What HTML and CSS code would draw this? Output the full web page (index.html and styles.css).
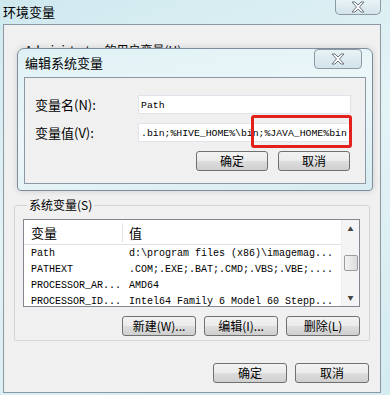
FILE: index.html
```html
<!DOCTYPE html>
<html lang="zh-CN">
  <head>
    <meta charset="UTF-8" />
    <meta name="viewport" content="width=device-width, initial-scale=1.0" />
    <title>环境变量</title>
    <link rel="stylesheet" href="styles.css">
  </head>
  <body>
    <div class="titlebar">
      <span class="title">环境变量</span>
      <div class="close-btn outer-close">
        <svg width="16" height="12" viewBox="0 0 16 12">
          <path d="M2 1h3l3 3 3-3h3l-4.5 5 4.5 5h-3l-3-3-3 3H2l4.5-5z" fill="#fff" stroke="#6b7480" stroke-width="1" />
        </svg>
      </div>
    </div>

    <div class="window">
      <div class="user-label">Administrator 的用户变量(U)</div>

      <fieldset class="group">
        <legend>系统变量(S)</legend>
        <div class="listbox">
          <div class="list-main">
            <div class="list-head">
              <span class="col-name">变量</span>
              <span class="col-value">值</span>
            </div>
            <div class="list-row">
              <span class="col-name">Path</span>
              <span class="col-value">d:\program files (x86)\imagemag...</span>
            </div>
            <div class="list-row">
              <span class="col-name">PATHEXT</span>
              <span class="col-value">.COM;.EXE;.BAT;.CMD;.VBS;.VBE;....</span>
            </div>
            <div class="list-row">
              <span class="col-name">PROCESSOR_AR...</span>
              <span class="col-value">AMD64</span>
            </div>
            <div class="list-row">
              <span class="col-name">PROCESSOR_ID...</span>
              <span class="col-value">Intel64 Family 6 Model 60 Stepp...</span>
            </div>
          </div>
          <div class="scrollbar">
            <span class="arrow">&#9650;</span>
            <span class="thumb"></span>
            <span class="arrow down">&#9660;</span>
          </div>
        </div>
        <div class="btn-row">
          <button class="btn wide">新建(W)...</button>
          <button class="btn wide">编辑(I)...</button>
          <button class="btn wide">删除(L)</button>
        </div>
      </fieldset>

      <div class="btn-row footer">
        <button class="btn wide">确定</button>
        <button class="btn wide">取消</button>
      </div>
    </div>

    <div class="dialog">
      <div class="dialog-title">
        <span class="title">编辑系统变量</span>
        <div class="close-btn inner-close">
          <svg width="16" height="12" viewBox="0 0 16 12">
            <path d="M2 1h3l3 3 3-3h3l-4.5 5 4.5 5h-3l-3-3-3 3H2l4.5-5z" fill="#fff" stroke="#6b7480" stroke-width="1" />
          </svg>
        </div>
      </div>
      <div class="dialog-client">
        <div class="field">
          <label>变量名(N):</label>
          <div class="input">Path</div>
        </div>
        <div class="field">
          <label>变量值(V):</label>
          <div class="input">.bin;%HIVE_HOME%\bin;%JAVA_HOME%bin</div>
        </div>
        <div class="btn-row dialog-btns">
          <button class="btn">确定</button>
          <button class="btn">取消</button>
        </div>
        <div class="highlight"></div>
      </div>
    </div>
  </body>
</html>
```

FILE: styles.css
```css
body {
  margin: 0;
  width: 390px;
  height: 395px;
  overflow: hidden;
  position: relative;
  font-family: "Noto Sans CJK SC", "Liberation Sans", sans-serif;
  font-size: 12px;
  color: #000;
  background: linear-gradient(160deg, #cfe9ef 0%, #e4f3f6 45%, #d4ebf0 100%);
}

.titlebar {
  height: 24px;
  position: relative;
}

.title {
  position: relative;
  top: 3px;
  left: 3px;
  font-size: 13px;
  line-height: 18px;
}

.close-btn {
  position: absolute;
  display: flex;
  justify-content: center;
  align-items: center;
  border: 1px solid #8d9aa6;
  border-top: none;
  border-radius: 0 0 5px 5px;
  background: linear-gradient(#e8f3f6, #d3e4ea);
  box-sizing: border-box;
}

.outer-close {
  left: 335px;
  top: 0;
  width: 46px;
  height: 15px;
}

.inner-close {
  right: 4px;
  top: 0;
  width: 48px;
  height: 20px;
  border: 1px solid #8d9aa6;
  border-radius: 4px;
}

.window {
  margin-left: 3px;
  width: 378px;
  height: 369px;
  box-sizing: border-box;
  border: 1px solid #8b98a4;
  background: #f0f0f0;
  position: relative;
  padding: 17px 10px 0 10px;
}

.user-label {
  padding-left: 11px;
  height: 142px;
  line-height: 16px;
}

.group {
  margin: 14px 0 0 0;
  padding: 7px 9px 12px 8px;
  border: 1px solid #d5d5d5;
  border-radius: 2px;
  height: 143px;
  box-sizing: border-box;
}

.group legend {
  padding: 0 2px;
  margin-left: 4px;
  line-height: 14px;
}

.listbox {
  display: flex;
  height: 88px;
  border: 1px solid #828790;
  background: #fff;
  overflow: hidden;
  box-sizing: border-box;
}

.list-main {
  flex: 1;
}

.list-head {
  display: flex;
  height: 24px;
  align-items: center;
  border-bottom: 1px solid #e3e3e3;
  font-size: 13px;
}

.list-head .col-name {
  border-right: 1px solid #e3e3e3;
}

.list-row {
  display: flex;
  height: 16px;
  align-items: center;
  font-family: "Liberation Mono", monospace;
  font-size: 10px;
  white-space: nowrap;
}

.col-name {
  width: 99px;
  padding-left: 7px;
  box-sizing: border-box;
  white-space: nowrap;
}

.col-value {
  padding-left: 6px;
  white-space: nowrap;
  overflow: hidden;
}

.scrollbar {
  width: 17px;
  display: flex;
  flex-direction: column;
  align-items: center;
  background: #f4f4f4;
  border-left: 1px solid #ececec;
}

.arrow {
  font-size: 6px;
  color: #444;
  height: 17px;
  line-height: 17px;
}

.arrow.down {
  margin-top: auto;
}

.thumb {
  width: 14px;
  height: 16px;
  margin-top: 18px;
  border: 1px solid #9c9c9c;
  border-radius: 2px;
  background: linear-gradient(90deg, #f3f3f3, #dcdcdc);
  box-sizing: border-box;
}

.btn-row {
  display: flex;
  justify-content: flex-end;
  gap: 8px;
  margin-top: 9px;
}

.btn {
  font-family: "Noto Sans CJK SC", "Liberation Sans", sans-serif;
  font-size: 12px;
  height: 20px;
  width: 72px;
  padding: 0;
  line-height: 16px;
  border: 1px solid #707070;
  border-radius: 3px;
  background: linear-gradient(#f2f2f2 0%, #ebebeb 50%, #dddddd 51%, #cfcfcf 100%);
  color: #000;
}

.btn.wide {
  width: 74px;
}

.footer {
  margin-top: 22px;
  padding-right: 1px;
}

.dialog {
  position: absolute;
  left: 17px;
  top: 48px;
  width: 356px;
  height: 143px;
  box-sizing: border-box;
  border: 1px solid #7e8d9b;
  border-radius: 7px 7px 4px 4px;
  background: linear-gradient(170deg, #dff1f5 0%, #edf7f9 50%, #d7ecf1 100%);
  box-shadow: 0 0 6px rgba(0, 0, 0, 0.15);
  padding: 0 6px;
}

.dialog-title {
  height: 28px;
  position: relative;
}

.dialog-title .title {
  top: 5px;
  left: 1px;
  font-size: 13px;
}

.dialog-client {
  position: relative;
  height: 107px;
  box-sizing: border-box;
  border: 1px solid #8c99a5;
  background: #f0f0f0;
  padding: 17px 14px 0 10px;
}

.field {
  display: flex;
  align-items: center;
  margin-bottom: 9px;
}

.field label {
  width: 103px;
  font-size: 13px;
}

.input {
  flex: 1;
  height: 19px;
  line-height: 19px;
  background: #fff;
  border: 1px solid #e2e3ea;
  box-sizing: border-box;
  padding-left: 2px;
  font-family: "Liberation Mono", monospace;
  font-size: 9.8px;
  white-space: nowrap;
  overflow: hidden;
}

.dialog-btns {
  margin-top: 2px;
  padding-right: 1px;
  gap: 10px;
}

.highlight {
  position: absolute;
  left: 226px;
  top: 37px;
  width: 101px;
  height: 33px;
  border: 3px solid #e3201c;
  border-radius: 3px;
  box-sizing: border-box;
}
```
